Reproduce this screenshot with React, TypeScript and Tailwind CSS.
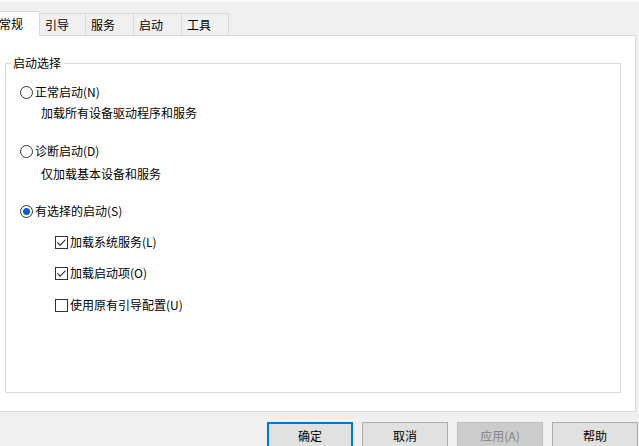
import React from "react";

const font = { fontFamily: '"Noto Sans CJK SC", "Noto Sans", sans-serif' };

function Radio({ checked, label }: { checked?: boolean; label: string }) {
  return (
    <div className="flex h-[20px] items-center">
      <span className="flex h-[13px] w-[13px] items-center justify-center rounded-full border border-[#333333] bg-white">
        {checked && <span className="h-[7px] w-[7px] rounded-full bg-[#0a62c4]" />}
      </span>
      <span className="ml-[2px] text-[12px] leading-4 text-black">{label}</span>
    </div>
  );
}

function Check({ checked, label }: { checked?: boolean; label: string }) {
  return (
    <div className="ml-[35px] flex h-[20px] items-center">
      <span className="flex h-[13px] w-[13px] items-center justify-center border border-[#333333] bg-white">
        {checked && (
          <svg width="11" height="11" viewBox="0 0 11 11" fill="none">
            <path d="M1.5 5.5 L4.2 8.2 L9.5 2.6" stroke="#333333" strokeWidth="1.1" />
          </svg>
        )}
      </span>
      <span className="ml-[2px] text-[12px] leading-4 text-black">{label}</span>
    </div>
  );
}

function Btn({ label, primary, disabled }: { label: string; primary?: boolean; disabled?: boolean }) {
  let cls = "border border-[#adadad] bg-[#e1e1e1] text-black";
  if (primary) cls = "border-2 border-[#0078d7] bg-[#e1e1e1] text-black";
  if (disabled) cls = "border border-[#bfbfbf] bg-[#cccccc] text-[#838383]";
  return (
    <div className={`flex h-[28px] w-[86px] shrink-0 items-center justify-center text-[12px] leading-4 ${cls}`}>
      {label}
    </div>
  );
}

export default function App() {
  const tabs = [
    { t: "引导", w: "w-[46px]" },
    { t: "服务", w: "w-[48px]" },
    { t: "启动", w: "w-[48px]" },
    { t: "工具", w: "w-[47px]" },
  ];

  return (
    <div className="h-[446px] w-[639px] overflow-hidden bg-[#f0f0f0]" style={font}>
      <div className="h-[2px] bg-[#f9f9f9]" />

      {/* タブ */}
      <div className="ml-[-8px] flex h-[33px] items-end">
        <div className="relative z-10 mb-[-1px] flex h-[25px] w-[48px] items-center border-t border-r border-[#d9d9d9] bg-white pl-[7px] text-[12px] leading-4 text-black">
          常规
        </div>
        {tabs.map((tab) => (
          <div
            key={tab.t}
            className={`flex h-[22px] items-center border-t border-r border-[#d9d9d9] bg-[#f0f0f0] pl-[5px] text-[12px] leading-4 text-black ${tab.w}`}
          >
            {tab.t}
          </div>
        ))}
      </div>

      {/* 本体 */}
      <div className="ml-[-8px] h-[377px] w-[644px] border border-[#d9d9d9] bg-white pl-[12px] pt-[19px]">
        <fieldset className="h-[338px] w-[616px] border border-[#dcdcdc]">
          <legend className="ml-[5px] px-[2px] text-[12px] leading-4 text-black">启动选择</legend>
          <div className="pl-[14px]">
            <div className="mt-[11px]">
              <Radio label="正常启动(N)" />
            </div>
            <div className="mt-[1px] ml-[21px] flex h-[20px] items-center text-[12px] leading-4 text-black">
              加载所有设备驱动程序和服务
            </div>
            <div className="mt-[18px]">
              <Radio label="诊断启动(D)" />
            </div>
            <div className="mt-[3px] ml-[21px] flex h-[20px] items-center text-[12px] leading-4 text-black">
              仅加载基本设备和服务
            </div>
            <div className="mt-[17px]">
              <Radio checked label="有选择的启动(S)" />
            </div>
            <div className="mt-[11px]">
              <Check checked label="加载系统服务(L)" />
            </div>
            <div className="mt-[11px]">
              <Check checked label="加载启动项(O)" />
            </div>
            <div className="mt-[12px]">
              <Check label="使用原有引导配置(U)" />
            </div>
          </div>
        </fieldset>
      </div>

      {/* ボタン */}
      <div className="mt-[10px] flex justify-end gap-[9px] pr-[1px]">
        <Btn label="确定" primary />
        <Btn label="取消" />
        <Btn label="应用(A)" disabled />
        <Btn label="帮助" />
      </div>
    </div>
  );
}
